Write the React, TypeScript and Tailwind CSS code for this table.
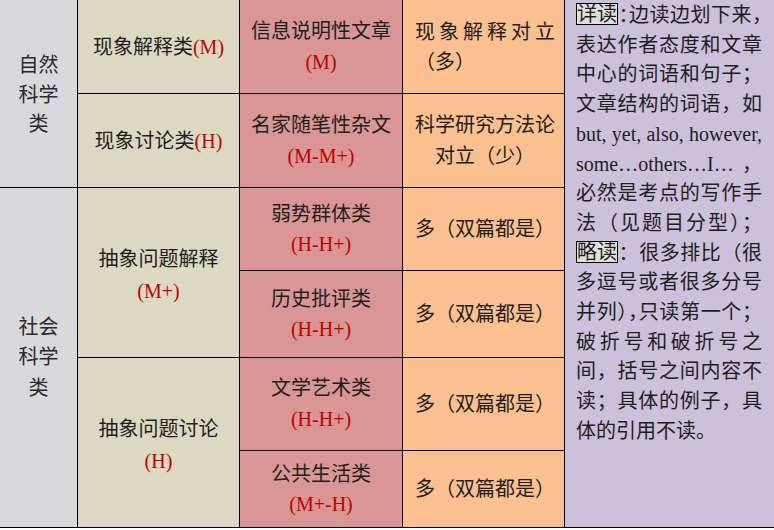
import type { ReactNode } from "react"

function Red({ children }: { children: ReactNode }) {
  return <span className="text-[#c00000]">{children}</span>
}

function Boxed({ children }: { children: ReactNode }) {
  return (
    <span className="inline-block border border-black bg-[#dfe0dc] leading-[20px] align-[1px]">
      {children}
    </span>
  )
}

// right-hand notes, one div per printed line
const Line = ({ children, last }: { children: ReactNode; last?: boolean }) => (
  <div className={last ? "whitespace-nowrap" : "whitespace-nowrap text-justify [text-align-last:justify]"}>
    {children}
  </div>
)

const Half = ({ children }: { children: ReactNode }) => (
  <span className="[font-feature-settings:'halt']">{children}</span>
)

export default function App() {
  return (
    <div className="w-[774px] h-[530px] bg-white font-['Liberation_Serif','Noto_Sans_CJK_SC',serif] text-[20px] text-[#1e1e1e]">
      <div className="grid grid-cols-[77px_161px_162px_161px_1fr] grid-rows-[93px_93px_82px_86px_92px_76px] gap-px bg-black border-b border-black">
        {/* 自然科学类 */}
        <div className="col-start-1 row-start-1 row-span-2 bg-[#d9d9dd] flex flex-col items-center justify-center pt-[4px] leading-[29.5px] text-[#2a2a2a]">
          <div>自然</div>
          <div>科学</div>
          <div>类</div>
        </div>
        <div className="col-start-2 row-start-1 bg-[#dcd9c3] flex items-center justify-center">
          现象解释类<Red>(M)</Red>
        </div>
        <div className="col-start-2 row-start-2 bg-[#dcd9c3] flex items-center justify-center">
          现象讨论类<Red>(H)</Red>
        </div>
        <div className="col-start-3 row-start-1 bg-[#d99694] flex flex-col items-center justify-center leading-[31px]">
          <div>信息说明性文章</div>
          <Red>(M)</Red>
        </div>
        <div className="col-start-3 row-start-2 bg-[#d99694] flex flex-col items-center justify-center leading-[31px]">
          <div>名家随笔性杂文</div>
          <Red>(M-M+)</Red>
        </div>
        <div className="col-start-4 row-start-1 bg-[#fac090] flex flex-col justify-center pl-3 leading-[30px]">
          <div className="w-[140px] text-justify [text-align-last:justify]">现象解释对立</div>
          <div>（多）</div>
        </div>
        <div className="col-start-4 row-start-2 bg-[#fac090] flex flex-col justify-center pl-3 leading-[31px]">
          <div className="w-[140px] text-center">科学研究方法论</div>
          <div className="w-[140px] text-center">对立（少）</div>
        </div>

        {/* 社会科学类 */}
        <div className="col-start-1 row-start-3 row-span-4 bg-[#d9d9dd] flex flex-col items-center justify-center leading-[30.5px] text-[#2a2a2a]">
          <div>社会</div>
          <div>科学</div>
          <div>类</div>
        </div>
        <div className="col-start-2 row-start-3 row-span-2 bg-[#dcd9c3] flex flex-col items-center justify-center pt-[4px] leading-[32px]">
          <div>抽象问题解释</div>
          <Red>(M+)</Red>
        </div>
        <div className="col-start-2 row-start-5 row-span-2 bg-[#dcd9c3] flex flex-col items-center justify-center pt-[4px] leading-[32px]">
          <div>抽象问题讨论</div>
          <Red>(H)</Red>
        </div>
        <div className="col-start-3 row-start-3 bg-[#d99694] flex flex-col items-center justify-center leading-[30px]">
          <div>弱势群体类</div>
          <Red>(H-H+)</Red>
        </div>
        <div className="col-start-3 row-start-4 bg-[#d99694] flex flex-col items-center justify-center leading-[30px]">
          <div>历史批评类</div>
          <Red>(H-H+)</Red>
        </div>
        <div className="col-start-3 row-start-5 bg-[#d99694] flex flex-col items-center justify-center leading-[31px]">
          <div>文学艺术类</div>
          <Red>(H-H+)</Red>
        </div>
        <div className="col-start-3 row-start-6 bg-[#d99694] flex flex-col items-center justify-center leading-[30px]">
          <div>公共生活类</div>
          <Red>(M+-H)</Red>
        </div>
        {[3, 4, 5, 6].map((r) => (
          <div
            key={r}
            className={
              "col-start-4 bg-[#fac090] flex items-center pl-3 " +
              (r === 3 ? "row-start-3" : r === 4 ? "row-start-4" : r === 5 ? "row-start-5" : "row-start-6")
            }
          >
            多（双篇都是）
          </div>
        ))}

        {/* 阅读方法 */}
        <div className="col-start-5 row-start-1 row-span-6 bg-[#ccc1da] pt-[1px] pl-[11px] pr-[12px] leading-[29.7px]">
          <Line>
            <Boxed>详读</Boxed>
            <Half>：</Half>边读边划下来<Half>，</Half>
          </Line>
          <Line>表达作者态度和文章</Line>
          <Line>中心的词语和句子；</Line>
          <Line>文章结构的词语，如</Line>
          <Line>but, yet, also, however,</Line>
          <Line>some…others…I… ，</Line>
          <Line>必然是考点的写作手</Line>
          <Line>法（见题目分型）；</Line>
          <Line>
            <Boxed>略读</Boxed>
            ：很多排比（很
          </Line>
          <Line>多逗号或者很多分号</Line>
          <Line>
            并列<Half>）</Half>
            <Half>，</Half>只读第一个；
          </Line>
          <Line>破折号和破折号之</Line>
          <Line>间，括号之间内容不</Line>
          <Line>读；具体的例子，具</Line>
          <Line last>体的引用不读。</Line>
        </div>
      </div>
    </div>
  )
}
